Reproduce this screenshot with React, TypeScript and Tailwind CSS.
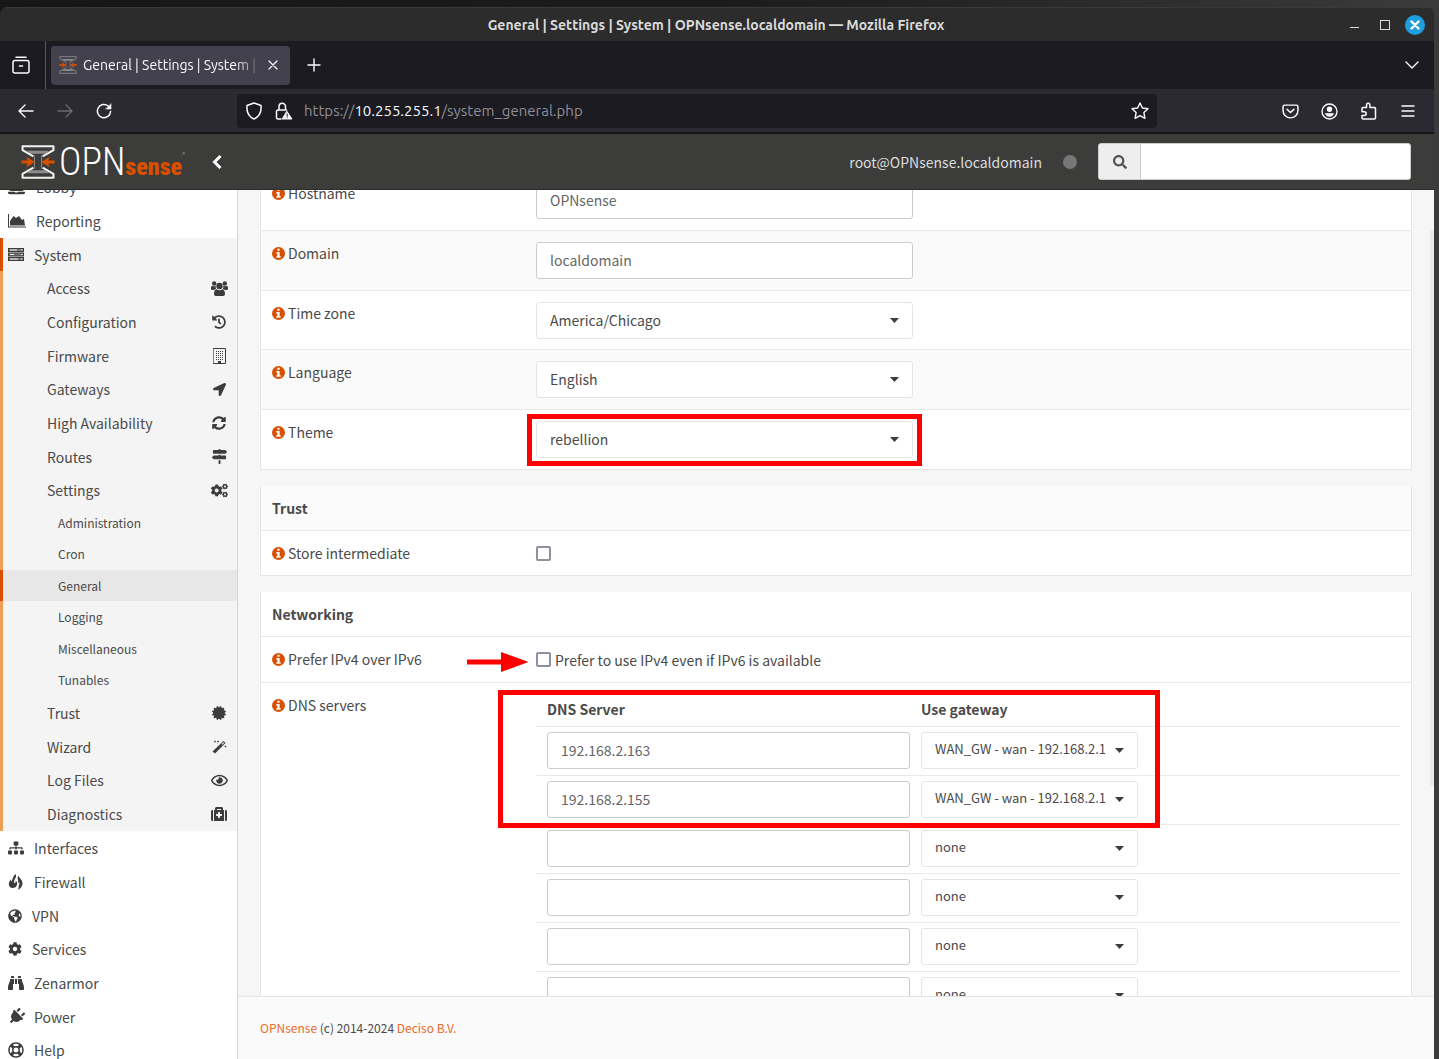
import type { ReactNode } from "react";
import {
  FaBinoculars,
  FaCertificate,
  FaCog,
  FaCogs,
  FaGlobeAmericas,
  FaHistory,
  FaLaptop,
  FaLocationArrow,
  FaMapSigns,
  FaMedkit,
  FaPlug,
  FaRegEye,
  FaRegLifeRing,
  FaSearch,
  FaSitemap,
  FaSyncAlt,
} from "react-icons/fa";

const line = {
  fill: "none",
  stroke: "currentColor",
  strokeLinecap: "round" as const,
  strokeLinejoin: "round" as const,
};

const InfoIcon = () => (
  <svg width="13" height="13" viewBox="0 0 13 13">
    <circle cx="6.500" cy="6.500" r="6.500" fill="#d94f00" />
    <path d="M5.400 1.800h2.200v2H5.400zM4.300 4.900h3.300v4.400h1.100v1.500H4.300V9.300h1.100V6.400H4.300z" fill="#fff" />
  </svg>
);

const AreaIcon = () => (
  <svg width="18" height="14" viewBox="0 0 18 14" fill="currentColor">
    <path d="M0 0h1v12.500h17v1H0zM2 11.500V7l3.500-5L8 4l3-2 3 4 2-1 1 6.500z" />
  </svg>
);

const ServerIcon = () => (
  <svg width="16" height="13" viewBox="0 0 16 13">
    <g fill="#777" stroke="currentColor" strokeWidth="1">
      <rect x=".5" y=".5" width="15" height="3" />
      <rect x=".5" y="5" width="15" height="3" />
      <rect x=".5" y="9.500" width="15" height="3" />
    </g>
    <path d="M2 2h7M2 6.500h4M2 11h8M13 2h1.500M13 6.500h1.500M13 11h1.500" stroke="#f4f4f4" strokeWidth="1" />
  </svg>
);

const UsersIcon = () => (
  <svg width="17" height="15" viewBox="0 0 17 15" fill="currentColor">
    <circle cx="3.200" cy="2.500" r="2.200" />
    <circle cx="13.800" cy="2.500" r="2.200" />
    <circle cx="8.500" cy="5" r="3.200" />
    <path d="M0 8V6.500Q.2 4.600 1.500 4.700q1.700 1 3.300 0Q4.500 7 5.200 7.800L3 9H1.200Q0 9 0 8zM17 8V6.500q-.2-1.900-1.500-1.800-1.700 1-3.300 0 .3 2.300-.4 3.100L14 9h1.800Q17 9 17 8z" />
    <path d="M3 13.200C3 10.500 3.800 8.200 5.500 8.200q3 2 6 0c1.700 0 2.500 2.300 2.500 5q0 1.800-1.800 1.800H4.800Q3 15 3 13.200z" />
  </svg>
);

const BuildingIcon = () => (
  <svg width="13" height="16" viewBox="0 0 13 16">
    <rect x=".5" y=".5" width="12" height="15" {...line} />
    <path
      d="M3 3.500h8M3 5.500h8M3 7.500h8M3 9.500h8M3 11.500h8"
      stroke="currentColor"
      strokeDasharray="1 1"
    />
    <path d="M5 13h3v3H5z" fill="currentColor" />
  </svg>
);

const WandIcon = () => (
  <svg width="15" height="14" viewBox="0 0 15 14">
    <path d="M.5 11.500L11.500 1l2 2L3 13.500z" fill="currentColor" />
    <path d="M9.500 4l2-1.700.8.8-2 1.700z" fill="#f4f4f4" />
    <path d="M3 .5v2M2 1.500h2M6 .5v2M5 1.500h2M13.500 5.500v2M12.500 6.500h2" stroke="currentColor" strokeWidth=".7" />
  </svg>
);

const FireIcon = () => (
  <svg width="16" height="16" viewBox="0 0 16 16" fill="currentColor">
    <path d="M7.500 0C9.500 3 6 5 6 8c0 1.500 1.500 1.500 1.700 0 .1-1-.2-1.600-.2-1.600 2 1.200 2 3.600 1.200 5.100-.9 1.800-2.200 2.500-4.200 2.500C2.300 14 .8 12.300.8 10c0-2 1.200-3 1.700-4.500.5.800.6 1.300.5 2.300C5 6 4 3.500 7.500 0z" />
    <path d="M10.500 1.500c-.3 2 4.200 4 4 8-.1 3-1.800 5-4.500 6.500.9-1.800.6-2.800.8-4 .2-1.200.9-1.800.7-3.500-.5.300-.8.600-1.100 1.100C10.700 6.500 8.500 4 10.500 1.500z" />
  </svg>
);

const LogoMark = ({ size, arm }: { size: number; arm: string }) => (
  <svg width={size} height={size} viewBox="0 0 32 33" fill="none">
    <path d="M5 5.500h22l-4 3H9zM5 27.500h22l-4-3H9z" fill="#8c8c8c" />
    <path d="M12.500 10v13M19.500 10v13" stroke="#8c8c8c" strokeWidth="1" />
    <path
      d="M11.500 11L1 5V1.200h30V5l-10.500 6M11.500 22L1 28v3.800h30V28l-10.500-6"
      stroke={arm}
      strokeWidth="2"
      strokeLinejoin="round"
    />
    <path d="M0 15h6l-1.500-3.500L13 16.500l-8.500 5L6 18H0zM32 15h-6l1.500-3.500-8.500 5 8.500 5L26 18h6z" fill="#d94f00" />
  </svg>
);

const navIcon = "flex items-center text-[#3c3c3b]";

const systemItems: { name: string; icon: ReactNode; children?: string[] }[] = [
  { name: "Access", icon: <UsersIcon /> },
  { name: "Configuration", icon: <FaHistory size={14} /> },
  { name: "Firmware", icon: <BuildingIcon /> },
  { name: "Gateways", icon: <FaLocationArrow size={13} /> },
  { name: "High Availability", icon: <FaSyncAlt size={14} /> },
  { name: "Routes", icon: <FaMapSigns size={15} /> },
  {
    name: "Settings",
    icon: <FaCogs size={17} />,
    children: ["Administration", "Cron", "General", "Logging", "Miscellaneous", "Tunables"],
  },
  { name: "Trust", icon: <FaCertificate size={14} /> },
  { name: "Wizard", icon: <WandIcon /> },
  { name: "Log Files", icon: <FaRegEye size={17} /> },
  { name: "Diagnostics", icon: <FaMedkit size={16} /> },
];

const navItems: { name: string; icon: ReactNode; width: string }[] = [
  { name: "Lobby", icon: <FaLaptop size={17} />, width: "w-7" },
  { name: "Reporting", icon: <AreaIcon />, width: "w-7" },
  { name: "System", icon: <ServerIcon />, width: "w-[26px]" },
  { name: "Interfaces", icon: <FaSitemap size={16} />, width: "w-[26px]" },
  { name: "Firewall", icon: <FireIcon />, width: "w-[26px]" },
  { name: "VPN", icon: <FaGlobeAmericas size={14} />, width: "w-6" },
  { name: "Services", icon: <FaCog size={14} />, width: "w-6" },
  { name: "Zenarmor", icon: <FaBinoculars size={16} />, width: "w-[26px]" },
  { name: "Power", icon: <FaPlug size={17} className="rotate-45" />, width: "w-[26px]" },
  { name: "Help", icon: <FaRegLifeRing size={16} />, width: "w-[26px]" },
];

const rowHeight = (i: number) => (i % 3 === 2 ? "h-[33px]" : "h-[34px]");

function Sidebar() {
  return (
    <nav className="w-[238px] shrink-0 overflow-hidden border-r border-[#d5d5d5] bg-white">
      <ul className="-mt-5">
        {navItems.map((item, i) => (
          <li key={item.name}>
            <a
              href="#"
              className={`flex items-center ${rowHeight(i)} ${
                item.name === "System" ? "border-l-3 border-[#d94f00] bg-[#f4f4f4] pl-[5px]" : "pl-2"
              }`}
            >
              <span className={`${navIcon} ${item.width}`}>{item.icon}</span>
              {item.name}
            </a>
            {item.name === "System" && (
              <ul className="bg-[#f4f4f4]">
                {systemItems.map((sub, j) => (
                  <li key={sub.name}>
                    <a
                      href="#"
                      className={`flex items-center justify-between border-l-3 border-[#f09c53] pl-11 ${rowHeight(j)}`}
                    >
                      {sub.name}
                      <span className={`${navIcon} mr-2 w-5 justify-center`}>{sub.icon}</span>
                    </a>
                    {sub.children && (
                      <ul className="text-xs">
                        {sub.children.map((child) => (
                          <li key={child} className="h-[31px] even:h-8">
                            <a
                              href="#"
                              className={`flex h-full items-center border-l-3 pl-[55px] ${
                                child === "General" ? "border-[#d94f00] bg-[#e7e7e7]" : "border-[#f09c53]"
                              }`}
                            >
                              {child}
                            </a>
                          </li>
                        ))}
                      </ul>
                    )}
                  </li>
                ))}
              </ul>
            )}
          </li>
        ))}
      </ul>
    </nav>
  );
}

function Caret() {
  return (
    <svg
      className="pointer-events-none absolute top-4 right-[14px]"
      width="9"
      height="5"
      viewBox="0 0 9 5"
      fill="#3c3c3b"
    >
      <path d="M0 0h9L4.500 5z" />
    </svg>
  );
}

const field = "h-[37px] w-full rounded-[3px] border bg-white pb-0.5 pl-[13px] outline-none";

function Select({ id, label, value, className = "pr-8" }: { id?: string; label?: string; value: string; className?: string }) {
  return (
    <div className="relative">
      <select id={id} aria-label={label} className={`${field} ${className} appearance-none border-[#e5e5e5]`}>
        <option>{value}</option>
      </select>
      <Caret />
    </div>
  );
}

function Row({ id, label, className = "", children }: { id: string; label: string; className?: string; children: ReactNode }) {
  return (
    <div className={`grid grid-cols-[264px_1fr] border-t border-[#e9e9e9] px-[11px] ${className}`}>
      <label htmlFor={id} className="mt-3 flex h-5 items-center gap-[3px] self-start">
        <InfoIcon />
        {label}
      </label>
      {children}
    </div>
  );
}

const card = "border-x border-b border-[#e5e5e5] bg-white";
const checkbox = "size-[15px] appearance-none rounded-[2px] border-2 border-[#8f8f9d] bg-white";

const general = [
  { id: "hostname", label: "Hostname", value: "OPNsense", input: true },
  { id: "domain", label: "Domain", value: "localdomain", input: true },
  { id: "timezone", label: "Time zone", value: "America/Chicago" },
  { id: "language", label: "Language", value: "English" },
  { id: "theme", label: "Theme", value: "rebellion" },
];

const gateway = "WAN_GW - wan - 192.168.2.1";

const dnsServers = [
  { ip: "192.168.2.163", gateway },
  { ip: "192.168.2.155", gateway },
  { ip: "", gateway: "none" },
  { ip: "", gateway: "none" },
  { ip: "", gateway: "none" },
  { ip: "", gateway: "none" },
];

function SettingsForm() {
  return (
    <form className="relative min-h-0 flex-1 overflow-hidden bg-[#f6f6f6] px-[22px]">
      <div className="-mt-5 flex flex-col gap-4">
        <section className={card}>
          {general.map((f) => (
            <Row key={f.id} id={f.id} label={f.label} className="h-[60px] even:bg-[#fafafa] nth-3:h-[59px]">
              <div className="relative mt-[11px] h-[37px] w-[377px]">
                {f.input ? (
                  <input id={f.id} defaultValue={f.value} className={`${field} border-[#ccc] text-[#666]`} />
                ) : (
                  <Select id={f.id} value={f.value} />
                )}
                {f.id === "theme" && (
                  <div className="pointer-events-none absolute -top-[7px] -right-[9px] -bottom-2 -left-[9px] border-5 border-[#f00]" />
                )}
              </div>
            </Row>
          ))}
        </section>

        <section className={card}>
          <h2 className="flex h-11 items-center bg-[#fbfbfb] px-[11px] font-bold">Trust</h2>
          <Row id="intermediate" label="Store intermediate" className="h-[45px]">
            <input type="checkbox" id="intermediate" className={`${checkbox} self-center`} />
          </Row>
        </section>

        <section className={card}>
          <h2 className="flex h-11 items-center px-[11px] font-bold">Networking</h2>
          <Row id="prefer" label="Prefer IPv4 over IPv6" className="h-[46px]">
            <div className="relative flex items-center gap-1">
              <svg className="absolute top-[15px] -left-[69px]" width="62" height="20" viewBox="0 0 62 20" fill="#f00">
                <path d="M0 7.500h34V0l27.500 10L34 20v-7.500H0z" />
              </svg>
              <input type="checkbox" id="prefer" className={checkbox} />
              <span>Prefer to use IPv4 even if IPv6 is available</span>
            </div>
          </Row>
          <Row id="dns0" label="DNS servers" className="pb-3">
            <div className="relative mt-[10px]">
              <table className="w-full table-fixed border-collapse">
                <thead>
                  <tr className="h-[33px] text-left">
                    <th className="w-[374px] pl-[11px]">DNS Server</th>
                    <th className="pl-[11px]">Use gateway</th>
                  </tr>
                </thead>
                <tbody>
                  {dnsServers.map((s, i) => (
                    <tr key={i} className="h-[49px] border-t border-[#e9e9e9]">
                      <td className="pl-[11px]">
                        <input
                          id={`dns${i}`}
                          aria-label={`DNS server ${i + 1}`}
                          defaultValue={s.ip}
                          className={`${field} border-[#ccc] text-[#666]`}
                        />
                      </td>
                      <td className="pl-[11px]">
                        <div className="w-[217px]">
                          <Select label={`Gateway ${i + 1}`} value={s.gateway} className="pr-6 text-[13px]" />
                        </div>
                      </td>
                    </tr>
                  ))}
                </tbody>
              </table>
              <div className="pointer-events-none absolute -top-[3px] -left-[38px] h-[138px] w-[662px] border-5 border-[#f00]" />
            </div>
          </Row>
        </section>
      </div>
      <div className="absolute top-10 right-0 h-[556px] w-1 rounded bg-[#e9e9e9]" />
    </form>
  );
}

function TitleBar() {
  return (
    <div className="flex h-[34px] shrink-0 items-center border-t border-[#3a3a3a] bg-[#2c2c2c] pr-[9px] pl-[84px] text-[#dadada]">
      <h1 className="flex-1 text-center text-sm font-semibold">
        General | Settings | System | OPNsense.localdomain — Mozilla Firefox
      </h1>
      <div className="flex items-center gap-[15px]">
        <button aria-label="Minimize" className="mr-1 flex h-4 w-[13px] items-end justify-center pb-[5px]">
          <span className="h-px w-[9px] bg-[#dadada]" />
        </button>
        <button aria-label="Maximize" className="size-[10px] border border-[#dadada]" />
        <button aria-label="Close" className="flex size-5 items-center justify-center rounded-full bg-[#1f9ede]">
          <svg width="10" height="10" viewBox="0 0 10 10" {...line} stroke="#fff" strokeWidth="2.400">
            <path d="M1.500 1.500l7 7M8.500 1.500l-7 7" />
          </svg>
        </button>
      </div>
    </div>
  );
}

function TabBar() {
  return (
    <div className="flex h-12 shrink-0 items-center bg-[#1c1b22] pr-[15px] text-[#fbfbfe]">
      <button aria-label="Firefox View" className="flex h-full w-[46px] items-center border-r border-[#55545e] pl-3">
        <svg width="18" height="18" viewBox="0 0 18 18" {...line} strokeWidth="1.500">
          <path d="M4 1.200h10" />
          <rect x="1" y="4.500" width="16" height="12.500" rx="2" />
          <path d="M7.500 10h3" />
        </svg>
      </button>
      <div className="ml-[5px] flex h-[39px] w-[239px] items-center gap-[6px] rounded bg-[#42414d] pr-3 pl-2 text-sm">
        <LogoMark size={18} arm="#77767c" />
        <span className="min-w-0 flex-1 mask-r-from-85% whitespace-nowrap">General | Settings | System |</span>
        <button aria-label="Close tab">
          <svg width="10" height="10" viewBox="0 0 10 10" {...line} strokeWidth="1.200">
            <path d="M1 1l8 8M9 1L1 9" />
          </svg>
        </button>
      </div>
      <button aria-label="New tab" className="ml-[17px]">
        <svg width="14" height="14" viewBox="0 0 14 14" {...line} strokeWidth="1.400">
          <path d="M7 1v12M1 7h12" />
        </svg>
      </button>
      <button aria-label="List all tabs" className="ml-auto">
        <svg width="14" height="9" viewBox="0 0 14 9" {...line} strokeWidth="1.400">
          <path d="M1 1l6 6 6-6" />
        </svg>
      </button>
    </div>
  );
}

function Toolbar() {
  return (
    <div className="flex h-[45px] shrink-0 items-center border-b-2 border-[#151515] bg-[#2b2a33] pt-px text-[#fbfbfe]">
      <div className="flex w-[237px] shrink-0 items-center gap-[23px] pl-[18px]">
        <button aria-label="Back">
          <svg width="16" height="14" viewBox="0 0 16 14" {...line} strokeWidth="1.400">
            <path d="M15 7H1M7 1L1 7l6 6" />
          </svg>
        </button>
        <button aria-label="Forward" className="text-[#6b6a72]">
          <svg width="16" height="14" viewBox="0 0 16 14" {...line} strokeWidth="1.400">
            <path d="M1 7h14M9 1l6 6-6 6" />
          </svg>
        </button>
        <button aria-label="Reload">
          <svg width="16" height="16" viewBox="0 0 17 17" {...line} strokeWidth="1.600">
            <path d="M15.500 9A7 7 0 1 1 13 3.200" />
            <path d="M16 1v5.500h-5.500z" fill="currentColor" strokeWidth=".5" />
          </svg>
        </button>
      </div>
      <div className="flex h-[34px] w-[920px] min-w-0 items-center rounded bg-[#1c1b22] px-2">
        <svg width="18" height="18" viewBox="0 0 18 18" {...line} strokeWidth="1.500">
          <path d="M9 1L2 3.500C1.500 9 3 14.500 9 17c6-2.500 7.500-8 7-13.500z" />
        </svg>
        <svg className="ml-3 shrink-0" width="18" height="18" viewBox="0 0 18 18" {...line} strokeWidth="1.500">
          <path d="M4 8V4.500a3.200 3.200 0 0 1 6.500 0V8M6 17H3a1.500 1.500 0 0 1-1.500-1.500V9.500A1.500 1.500 0 0 1 3 8h8.500" />
          <path d="M12 9.500l5 7.500H7.500z" fill="currentColor" strokeWidth="1" />
          <path d="M12.200 12v2.200M12.200 15.700v.1" stroke="#1c1b22" strokeWidth="1" />
        </svg>
        <a href="#" className="ml-[11px] flex-1 text-[15px] text-[#8f8f95]">
          https://<span className="text-[#fbfbfe]">10.255.255.1</span>/system_general.php
        </a>
        <button aria-label="Bookmark">
          <svg width="18" height="18" viewBox="0 0 18 18" {...line} strokeWidth="1.400">
            <path d="M9 1l2.400 5 5.600.7-4.100 3.900 1 5.700L9 13.700l-4.900 2.600 1-5.700L1 6.700 6.600 6z" />
          </svg>
        </button>
      </div>
      <div className="ml-auto flex items-center gap-[22px] pr-[18px]">
        <button aria-label="Pocket">
          <svg width="17" height="17" viewBox="0 0 16 16" {...line} strokeWidth="1.400">
            <path d="M2.500 2h11A1.500 1.500 0 0 1 15 3.500V7A7 7 0 0 1 1 7V3.500A1.500 1.500 0 0 1 2.500 2zM4.800 6L8 9l3.200-3" />
          </svg>
        </button>
        <button aria-label="Account">
          <svg width="17" height="17" viewBox="0 0 17 17" {...line} strokeWidth="1.400">
            <circle cx="8.500" cy="8.500" r="7.500" />
            <circle cx="8.500" cy="6.300" r="2" fill="currentColor" />
            <path d="M4.500 10.500h8c-.5 2-2 3-4 3s-3.500-1-4-3z" fill="currentColor" strokeWidth=".6" />
          </svg>
        </button>
        <button aria-label="Extensions">
          <svg width="17" height="18" viewBox="0 0 17 18" {...line} strokeWidth="1.500">
            <path d="M2 9V6.500q0-1 1-1h3.500V3a1.700 1.700 0 0 1 3.400 0v2.500h4.600q1 0 1 1V16q0 1-1 1H3q-1 0-1-1v-2.500h2.300a1.700 1.700 0 0 0 0-3.800H2z" />
          </svg>
        </button>
        <button aria-label="Menu" className="flex w-[17px] justify-center">
          <svg width="14" height="12" viewBox="0 0 14 12" {...line} strokeWidth="1.400">
            <path d="M1 1h12M1 6h12M1 11h12" />
          </svg>
        </button>
      </div>
    </div>
  );
}

function AppHeader() {
  return (
    <header className="flex h-14 shrink-0 items-center border-b border-[#2c2c2b] bg-[#3c3c3b] pr-[23px] pl-[21px]">
      <a href="#" aria-label="OPNsense" className="flex w-[165px] items-center">
        <LogoMark size={34} arm="#f2f2f2" />
        <span className="ml-1 flex items-baseline font-['Roboto_Condensed','Liberation_Sans_Narrow',sans-serif] leading-none">
          <span className="text-[38px] leading-none font-light text-white">OPN</span>
          <span className="text-2xl leading-none font-black text-[#d94f00]">sense</span>
        </span>
        <span className="self-start pt-2 text-[6px] text-[#999]">®</span>
      </a>
      <button aria-label="Collapse menu" className="ml-[26px] text-white">
        <svg width="10" height="14" viewBox="0 0 10 14" fill="none" stroke="currentColor" strokeWidth="3">
          <path d="M8.500 1L2.500 7l6 6" />
        </svg>
      </button>
      <span className="ml-auto text-[#dcdcdc]">root@OPNsense.localdomain</span>
      <span className="mx-[21px] size-[14px] rounded-full bg-[#777]" />
      <div className="flex h-[37px] w-[313px] overflow-hidden rounded-[3px] border border-[#ccc] bg-white">
        <label htmlFor="search" className="flex w-[42px] items-center justify-center border-r border-[#ccc] bg-[#eee]">
          <FaSearch size={14} className="text-[#555]" />
        </label>
        <input id="search" aria-label="Search" className="min-w-0 flex-1 px-3 outline-none" />
      </div>
    </header>
  );
}

export default function App() {
  return (
    <div className="h-screen overflow-hidden bg-linear-to-r from-[#171717] via-[#1b1b1b] to-[#3b3b3b] pt-[7px] pr-[5px]">
      <div className="flex h-full flex-col overflow-hidden rounded-t-lg font-['Ubuntu','Noto_Sans',sans-serif]">
        <TitleBar />
        <TabBar />
        <Toolbar />
        <div className="flex min-h-0 flex-1 flex-col font-['Noto_Sans_CJK_SC',sans-serif] text-sm text-[#4a4a4a]">
          <AppHeader />
          <div className="flex min-h-0 flex-1">
            <Sidebar />
            <main className="flex min-w-0 flex-1 flex-col">
              <SettingsForm />
              <footer className="flex h-[63px] shrink-0 items-center border-t border-[#e5e5e5] bg-[#fafafa] px-[22px] text-xs">
                <p>
                  <a href="#" className="text-[#ea6a2a]">OPNsense</a> (c) 2014-2024{" "}
                  <a href="#" className="text-[#ea6a2a]">Deciso B.V.</a>
                </p>
              </footer>
            </main>
          </div>
        </div>
      </div>
    </div>
  );
}
